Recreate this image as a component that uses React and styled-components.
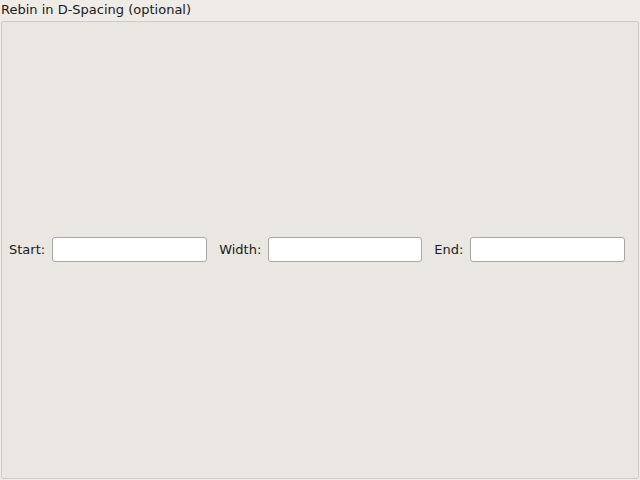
import React from "react";
import styled, { createGlobalStyle } from "styled-components";

const Global = createGlobalStyle`
  html, body {
    margin: 0;
    padding: 0;
    background: #efebe7;
    font-family: "DejaVu Sans", sans-serif;
    font-size: 13px;
    color: #1a1a1a;
  }
`;

const Page = styled.div`
  width: 640px;
  height: 480px;
  box-sizing: border-box;
  display: flex;
  flex-direction: column;
`;

const Title = styled.div`
  height: 21px;
  line-height: 19px;
  padding-left: 1px;
`;

const Frame = styled.div`
  flex: 1;
  margin: 0 1px 1px 1px;
  border: 1px solid #cfcbc6;
  border-radius: 2px;
  background: #eae7e2;
  display: flex;
  align-items: center;
  padding: 0 13px 0 7px;
`;

const Row = styled.div`
  display: flex;
  align-items: center;
  width: 100%;
  margin-bottom: 2px;
`;

const Label = styled.label`
  margin-left: ${(p) => p.gap || 0}px;
  margin-right: 7px;
  white-space: nowrap;
`;

const Input = styled.input`
  box-sizing: border-box;
  width: ${(p) => p.w}px;
  height: 25px;
  border: 1px solid #aaa6a1;
  border-radius: 3px;
  background: #fff;
  padding: 0 4px;
  font: inherit;
  outline: none;
`;

export default function App() {
  return (
    <Page>
      <Global />
      <Title>Rebin in D-Spacing (optional)</Title>
      <Frame>
        <Row>
          <Label>Start:</Label>
          <Input w={155} />
          <Label gap={12}>Width:</Label>
          <Input w={154} />
          <Label gap={12}>End:</Label>
          <Input w={155} />
        </Row>
      </Frame>
    </Page>
  );
}
